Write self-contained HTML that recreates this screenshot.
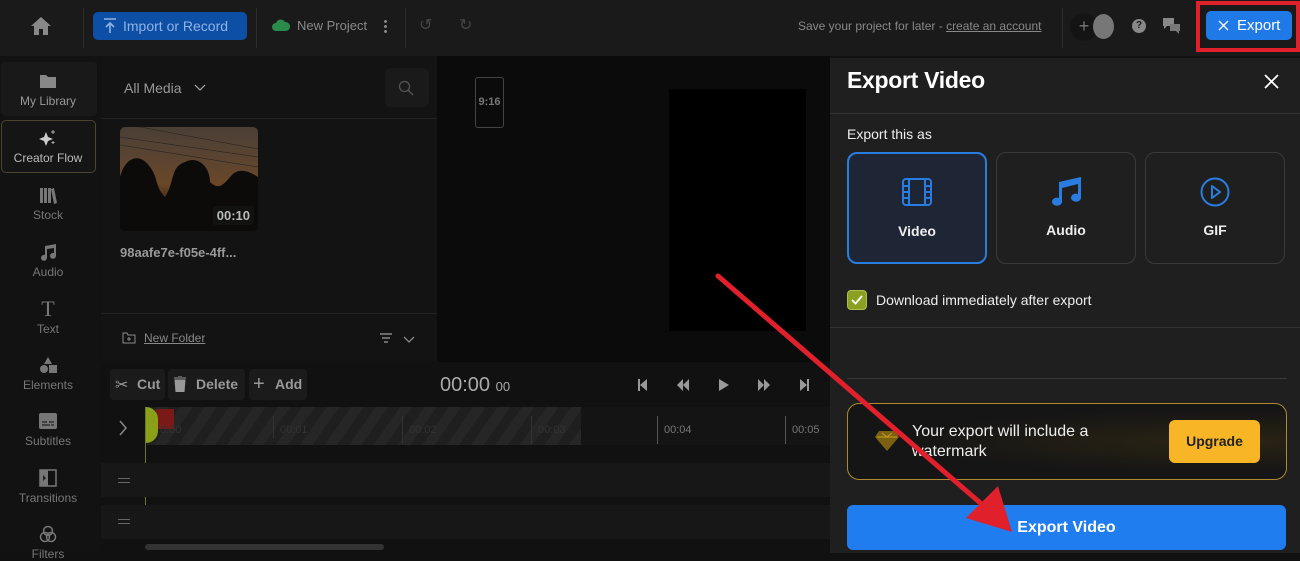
<!DOCTYPE html>
<html><head><meta charset="utf-8"><style>
*{box-sizing:border-box;margin:0;padding:0}
body{width:1300px;height:553px;overflow:hidden;background:#111;font-family:"Liberation Sans",sans-serif;color:#aaa;position:relative}
.abs{position:absolute}
.top{left:0;top:0;width:1300px;height:56px;background:#1a1a1a}
.sep{width:1px;background:#2c2c2c}
.side{left:0;top:56px;width:100px;height:497px;background:#121212}
.si{position:absolute;left:0;width:96px;text-align:center;font-size:12px;color:#777}
.si .ic{display:block;margin:0 auto 4px;width:18px;height:18px}
.media{left:101px;top:56px;width:336px;height:306px;background:#131313}
.prev{left:437px;top:56px;width:393px;height:306px;background:#0b0b0b}
.tl{left:101px;top:362px;width:729px;height:191px;background:#111}
.panel{left:830px;top:58px;width:470px;height:495px;background:#1f1f1f}
.card{position:absolute;top:94px;width:140px;height:112px;border:1.5px solid #3a3a3a;border-radius:10px;text-align:center;color:#eee;font-weight:bold;font-size:14px}
</style></head><body>
<div class="abs top"></div>
<svg class="abs" style="left:30px;top:16px" width="22" height="20" viewBox="0 0 22 20"><path d="M11 1L1 10h3v9h5v-6h4v6h5v-9h3z" fill="#888"/></svg>
<div class="abs sep" style="left:83px;top:8px;height:40px"></div>
<div class="abs" style="left:93px;top:12px;width:154px;height:28px;background:#0e4fa6;border-radius:5px;color:#8fb3e6;font-size:14px;line-height:28px;padding-left:30px">Import or Record</div>
<svg class="abs" style="left:103px;top:18px" width="14" height="16"><path d="M1 1h12M7 15V5M3 9l4-4 4 4" stroke="#8fb3e6" stroke-width="1.6" fill="none"/></svg>
<div class="abs sep" style="left:256px;top:8px;height:40px"></div>
<svg class="abs" style="left:272px;top:19px" width="18" height="13"><path d="M4 12a4 4 0 0 1 0-8 5 5 0 0 1 9-1 4 4 0 0 1 1 9z" fill="#2a8a4a"/></svg>
<div class="abs" style="left:297px;top:18px;font-size:13px;color:#888">New Project</div>
<div class="abs" style="left:384px;top:19px;width:3px;height:14px;background:radial-gradient(circle,#888 1.3px,transparent 1.6px) 0 0/3px 5px"></div>
<div class="abs sep" style="left:405px;top:8px;height:40px"></div>
<div class="abs" style="left:419px;top:15px;font-size:16px;color:#444">↺</div>
<div class="abs" style="left:459px;top:15px;font-size:16px;color:#444">↻</div>
<div class="abs" style="left:798px;top:19px;font-size:12px;color:#888">Save your project for later - <u>create an account</u></div>
<div class="abs sep" style="left:1062px;top:8px;height:40px"></div>
<div class="abs" style="left:1070px;top:13px;width:28px;height:28px;border-radius:50%;background:#141414;color:#777;font-size:18px;text-align:center;line-height:27px">+</div>
<div class="abs" style="left:1093px;top:14px;width:21px;height:25px;border-radius:50%;background:#777"></div>
<div class="abs" style="left:1132px;top:19px;width:14px;height:14px;border-radius:50%;background:#888;color:#1a1a1a;font-size:10px;font-weight:bold;text-align:center;line-height:14px">?</div>
<svg class="abs" style="left:1162px;top:17px" width="20" height="18"><path d="M1 1h11v8H5l-3 3V9H1z" fill="#888"/><path d="M8 7h10v7h-1v3l-3-3H8z" fill="#777"/></svg>
<div class="abs" style="left:1196px;top:1px;width:104px;height:51px;border:4px solid #e0202a"></div>
<div class="abs" style="left:1206px;top:11px;width:86px;height:29px;background:#1f7ae8;border-radius:5px;color:#fff;font-size:15px;line-height:29px;padding-left:31px">Export</div>
<svg class="abs" style="left:1218px;top:20px" width="11" height="11"><path d="M1 1l9 9M10 1l-9 9" stroke="#fff" stroke-width="1.3"/></svg>

<div class="abs side"></div>
<div class="abs" style="left:1px;top:62px;width:96px;height:54px;background:#191919;border-radius:4px"></div>
<div class="si" style="top:72px"><svg class="ic" viewBox="0 0 18 18"><path d="M1 3h6l2 2h8v11H1z" fill="#888"/></svg><span style="color:#999">My Library</span></div>
<div class="abs" style="left:1px;top:120px;width:95px;height:53px;border:1px solid #4a4530;border-radius:5px;background:#151515"></div>
<div class="si" style="top:129px"><svg class="ic" viewBox="0 0 18 18"><path d="M7 3l2 5 5 2-5 2-2 5-2-5-5-2 5-2z" fill="#ccc"/><path d="M14 1v4M12 3h4M14 12v3M12.5 13.5h3" stroke="#aaa"/></svg><span style="color:#bbb">Creator Flow</span></div>
<div class="si" style="top:186px"><svg class="ic" viewBox="0 0 18 18"><path d="M1 2h3v15H1zM5 2h3v15H5zM9 2h3v15H9zM12 3l3-1 3 15-3 1z" fill="#777"/></svg>Stock</div>
<div class="si" style="top:243px"><svg class="ic" viewBox="0 0 18 18"><path d="M6 3l11-2v12a3 3 0 1 1-2-3V5L8 6v9a3 3 0 1 1-2-3z" fill="#777"/></svg>Audio</div>
<div class="si" style="top:299px"><span style="display:block;font-family:'Liberation Serif';font-size:22px;line-height:20px;color:#777;margin-bottom:3px">T</span>Text</div>
<div class="si" style="top:356px"><svg class="ic" viewBox="0 0 18 18"><path d="M9 1l4 7H5z" fill="#777"/><circle cx="5" cy="13" r="4" fill="#777"/><rect x="10" y="9" width="8" height="8" fill="#777"/></svg>Elements</div>
<div class="si" style="top:412px"><svg class="ic" viewBox="0 0 18 18"><rect x="0" y="1" width="18" height="16" rx="2" fill="#777"/><path d="M3 10h5M10 10h5M3 13h8M12 13h3" stroke="#222" stroke-width="1.3"/></svg>Subtitles</div>
<div class="si" style="top:469px"><svg class="ic" viewBox="0 0 18 18"><rect x="1" y="1" width="16" height="16" fill="none" stroke="#777" stroke-width="1.5"/><rect x="1" y="1" width="8" height="16" fill="#777"/><path d="M4 6l3 3-3 3z" fill="#222"/></svg>Transitions</div>
<div class="si" style="top:525px"><svg class="ic" viewBox="0 0 18 18"><g fill="none" stroke="#777" stroke-width="1.5"><circle cx="9" cy="6" r="4.5"/><circle cx="6" cy="12" r="4.5"/><circle cx="12" cy="12" r="4.5"/></g></svg>Filters</div>

<div class="abs media"></div>
<div class="abs" style="left:124px;top:80px;font-size:14px;color:#999">All Media</div>
<svg class="abs" style="left:194px;top:84px" width="12" height="8"><path d="M1 1l5 5 5-5" stroke="#999" fill="none" stroke-width="1.3"/></svg>
<div class="abs" style="left:385px;top:68px;width:44px;height:39px;background:#1a1a1a;border-radius:6px"></div>
<svg class="abs" style="left:398px;top:80px" width="16" height="16"><circle cx="6.5" cy="6.5" r="5" stroke="#555" fill="none" stroke-width="1.3"/><path d="M10 10l5 5" stroke="#555" stroke-width="1.3"/></svg>
<div class="abs" style="left:101px;top:118px;width:336px;height:1px;background:#222"></div>
<div class="abs" style="left:120px;top:127px;width:138px;height:104px;border-radius:5px;overflow:hidden;background:linear-gradient(#4a3f36,#5e4530 35%,#6a4626 55%,#2a1e14 80%,#0e0c0a 100%)">
<svg width="138" height="104" style="position:absolute;left:0;top:0"><path d="M0 10L138 30M0 18L138 40M20 0L138 22" stroke="#2a2420" stroke-width=".6"/><path d="M0 50C5 30 20 25 30 40 38 50 35 60 45 70 55 55 50 40 65 35 78 28 90 40 90 55 100 65 105 55 112 48 120 40 130 45 138 50V104H0z" fill="#0d0b09"/></svg>
<div style="position:absolute;right:4px;bottom:6px;background:rgba(20,20,20,.8);color:#bbb;font-size:13px;font-weight:bold;padding:2px 4px;border-radius:3px">00:10</div></div>
<div class="abs" style="left:120px;top:245px;font-size:13px;font-weight:bold;color:#999">98aafe7e-f05e-4ff...</div>
<div class="abs" style="left:101px;top:313px;width:336px;height:1px;background:#222"></div>
<svg class="abs" style="left:122px;top:332px" width="14" height="12"><path d="M1 1h4l1 2h7v8H1z M7 5v4M5 7h4" stroke="#888" fill="none"/></svg>
<div class="abs" style="left:144px;top:331px;font-size:12px;color:#888;text-decoration:underline">New Folder</div>
<svg class="abs" style="left:379px;top:333px" width="14" height="11"><path d="M1 1h12M3 5h8M5 9h4" stroke="#888" stroke-width="1.5"/></svg>
<svg class="abs" style="left:403px;top:336px" width="12" height="8"><path d="M1 1l5 5 5-5" stroke="#888" fill="none" stroke-width="1.3"/></svg>

<div class="abs prev"></div>
<div class="abs" style="left:475px;top:77px;width:29px;height:51px;border:1px solid #444;border-radius:3px;color:#777;font-size:11px;font-weight:bold;text-align:center;line-height:49px">9:16</div>
<div class="abs" style="left:669px;top:89px;width:137px;height:242px;background:#000"></div>

<div class="abs tl"></div>
<div class="abs" style="left:110px;top:369px;width:55px;height:31px;background:#1b1b1b;border-radius:4px;color:#999;font-size:14px;font-weight:bold;line-height:31px;padding-left:27px">Cut</div>
<div class="abs" style="left:115px;top:375px;color:#999;font-size:16px">✂</div>
<div class="abs" style="left:168px;top:369px;width:77px;height:31px;background:#1b1b1b;border-radius:4px;color:#999;font-size:14px;font-weight:bold;line-height:31px;padding-left:28px">Delete</div>
<svg class="abs" style="left:174px;top:376px" width="12" height="16"><path d="M0 2h12M4 0h4M1 4h10l-1 12H2z" stroke="#999" fill="#999"/></svg>
<div class="abs" style="left:249px;top:369px;width:58px;height:31px;background:#1b1b1b;border-radius:4px;color:#999;font-size:14px;font-weight:bold;line-height:31px;padding-left:26px">Add</div>
<div class="abs" style="left:253px;top:373px;color:#999;font-size:20px;line-height:22px">+</div>
<div class="abs" style="left:440px;top:374px;color:#aaa;font-size:20px">00:00 <span style="font-size:13px">00</span></div>
<svg class="abs" style="left:636px;top:378px" width="180" height="14" fill="#999"><path d="M2 1h2v12H2zM4 7l7-6v12z"/><path d="M41 7l6-6v12zM47 7l6-6v12z"/><path d="M83 1l10 6-10 6z"/><path d="M122 1l6 6-6 6zM128 1l6 6-6 6z"/><path d="M164 1l7 6-7 6zM171 1h2v12h-2z"/></svg>
<div class="abs" style="left:145px;top:407px;width:685px;height:38px;background:#141414"></div>
<div class="abs" style="left:147px;top:407px;width:434px;height:38px;background:repeating-linear-gradient(-55deg,#262626 0 10px,#1f1f1f 10px 20px)"></div>
<div class="abs" style="left:156px;top:409px;width:18px;height:20px;background:#7a1a18"></div>
<div class="abs" style="left:145px;top:407px;width:13px;height:36px;background:#8aa018;border-radius:0 12px 12px 0"></div>
<div class="abs" style="left:145px;top:407px;width:1px;height:132px;background:#6a7a20"></div>
<svg class="abs" style="left:118px;top:420px" width="10" height="16"><path d="M2 1l6 7-6 7" stroke="#888" fill="none" stroke-width="1.5"/></svg>
<div class="abs" style="left:160px;top:424px;font-size:11px;color:#333;width:670px">
<span class="abs" style="left:0">0:00</span><span class="abs" style="left:113px;border-left:1px solid #333;padding-left:6px;top:-8px;line-height:28px;height:22px">00:01</span><span class="abs" style="left:242px;border-left:1px solid #333;padding-left:6px;top:-8px;line-height:28px">00:02</span><span class="abs" style="left:371px;border-left:1px solid #333;padding-left:6px;top:-8px;line-height:28px">00:03</span><span class="abs" style="left:497px;border-left:1px solid #555;padding-left:6px;top:-8px;line-height:28px;color:#777">00:04</span><span class="abs" style="left:625px;border-left:1px solid #555;padding-left:6px;top:-8px;line-height:28px;color:#777">00:05</span></div>
<div class="abs" style="left:101px;top:463px;width:729px;height:34px;background:#171717"></div>
<div class="abs" style="left:101px;top:505px;width:729px;height:34px;background:#171717"></div>
<div class="abs" style="left:118px;top:478px;width:12px;height:5px;border-top:1px solid #666;border-bottom:1px solid #666"></div>
<div class="abs" style="left:118px;top:519px;width:12px;height:5px;border-top:1px solid #666;border-bottom:1px solid #666"></div>
<div class="abs" style="left:145px;top:544px;width:239px;height:6px;background:#333;border-radius:3px"></div>

<div class="abs panel"></div>
<div class="abs" style="left:847px;top:67px;font-size:23px;font-weight:bold;color:#fff;letter-spacing:-.3px">Export Video</div>
<svg class="abs" style="left:1264px;top:74px" width="15" height="15"><path d="M1 1l13 13M14 1L1 14" stroke="#fff" stroke-width="1.8"/></svg>
<div class="abs" style="left:830px;top:113px;width:470px;height:1px;background:#333"></div>
<div class="abs" style="left:847px;top:126px;font-size:14px;color:#eee">Export this as</div>
<div class="card" style="left:847px;top:152px;background:#1e2635;border:2px solid #2a7de0"><svg style="margin-top:24px" width="30" height="28" viewBox="0 0 30 28"><rect x="1" y="1" width="28" height="26" rx="3" fill="none" stroke="#2a7de0" stroke-width="2"/><path d="M7 1v26M23 1v26M1 8h6M1 14h6M1 20h6M23 8h6M23 14h6M23 20h6" stroke="#2a7de0" stroke-width="2"/></svg><div style="margin-top:14px">Video</div></div>
<div class="card" style="left:996px;top:152px"><svg style="margin-top:24px" width="32" height="30" viewBox="0 0 32 30"><path d="M9 5l22-5v21a5 4 0 1 1-3-4V7L12 11v14a5 4 0 1 1-3-4z" fill="#2a7de0"/></svg><div style="margin-top:12px">Audio</div></div>
<div class="card" style="left:1145px;top:152px"><svg style="margin-top:24px" width="30" height="30"><circle cx="15" cy="15" r="13.5" fill="none" stroke="#2a7de0" stroke-width="2"/><path d="M12 9l8 6-8 6z" fill="none" stroke="#2a7de0" stroke-width="2" stroke-linejoin="round"/></svg><div style="margin-top:12px">GIF</div></div>
<div class="abs" style="left:847px;top:290px;width:20px;height:20px;background:#8aa020;border:1px solid #b0c050;border-radius:4px"></div>
<svg class="abs" style="left:851px;top:295px" width="12" height="10"><path d="M1 5l3.5 3.5L11 1" stroke="#fff" stroke-width="1.8" fill="none"/></svg>
<div class="abs" style="left:876px;top:292px;font-size:14px;color:#eee">Download immediately after export</div>
<div class="abs" style="left:830px;top:327px;width:470px;height:1px;background:#333"></div>
<div class="abs" style="left:847px;top:378px;width:440px;height:1px;background:#3a3a3a"></div>
<div class="abs" style="left:847px;top:403px;width:440px;height:77px;border:1px solid #b08a30;border-radius:12px;background:radial-gradient(ellipse at 85% 50%,#2a2414,#151515 60%)"></div>
<svg class="abs" style="left:874px;top:430px" width="26" height="22"><path d="M5 1h16l4 6-12 14L1 7z" fill="#7a6010"/><path d="M3 7h20M8 3l5 4 5-4" stroke="#c8a020" fill="none"/></svg>
<div class="abs" style="left:912px;top:422px;font-size:16px;color:#eee;line-height:20px;width:200px">Your export will include a watermark</div>
<div class="abs" style="left:1169px;top:420px;width:91px;height:43px;background:#f8b526;border-radius:6px;color:#222;font-weight:bold;font-size:14px;text-align:center;line-height:43px">Upgrade</div>
<div class="abs" style="left:847px;top:505px;width:439px;height:45px;background:#1f7df0;border-radius:6px;color:#fff;font-weight:bold;font-size:16px;text-align:center;line-height:45px">Export Video</div>

<svg class="abs" style="left:0;top:0" width="1300" height="553"><line x1="718" y1="276" x2="985" y2="507" stroke="#e0202a" stroke-width="5" stroke-linecap="round"/><path d="M1012 532L966 518 998 486z" fill="#e0202a"/></svg>
</body></html>
